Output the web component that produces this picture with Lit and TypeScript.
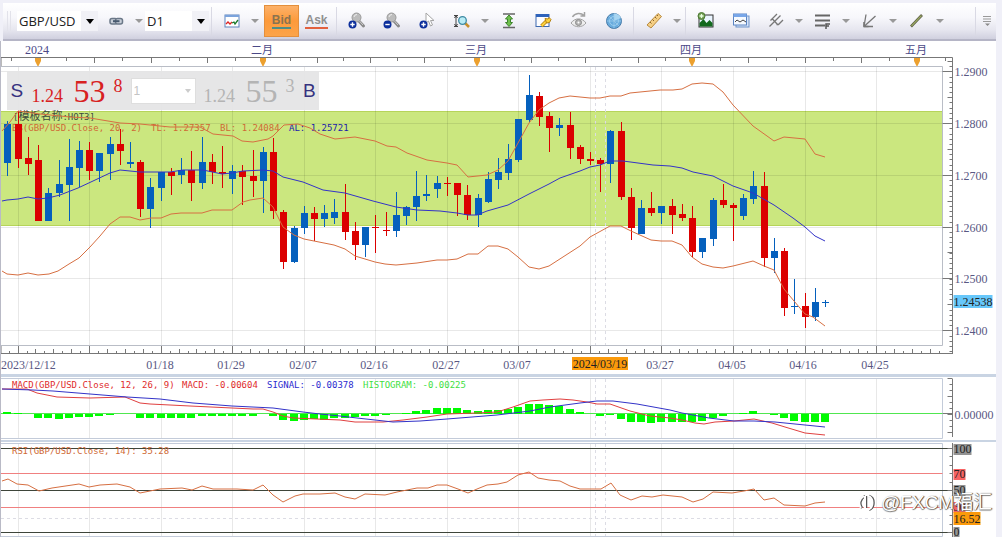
import { LitElement, html, svg, css } from "lit";
import { customElement, state } from "lit/decorators.js";

type Candle = [high: number, top: number, bottom: number, low: number, dir: "u" | "d"];

/* One entry per trading day: wick top, body top, body bottom, wick bottom, direction. */
const CANDLES: Candle[] = [
  [121, 124, 163, 176, "u"], [111, 124, 159, 168, "d"], [137, 158, 164, 175, "d"], [145, 160, 221, 221, "d"],
  [188, 193, 221, 221, "u"], [160, 184, 193, 197, "u"], [139, 167, 185, 221, "u"], [141, 150, 168, 187, "u"],
  [142, 150, 171, 180, "d"], [153, 153, 171, 182, "u"], [137, 144, 154, 180, "u"], [129, 144, 151, 165, "d"],
  [142, 162, 164, 168, "u"], [160, 162, 209, 217, "d"], [178, 187, 209, 228, "u"], [172, 172, 188, 201, "u"],
  [168, 172, 176, 195, "d"], [158, 170, 175, 184, "u"], [151, 170, 183, 201, "d"], [137, 162, 183, 189, "u"],
  [154, 162, 172, 184, "d"], [146, 172, 174, 188, "d"], [165, 171, 179, 194, "u"], [165, 171, 177, 205, "d"],
  [150, 176, 181, 197, "d"], [147, 152, 181, 213, "u"], [138, 152, 211, 219, "d"], [210, 212, 262, 269, "d"],
  [226, 228, 262, 263, "u"], [206, 213, 228, 234, "u"], [207, 213, 219, 241, "d"], [205, 213, 219, 227, "u"],
  [199, 212, 218, 224, "u"], [184, 212, 232, 240, "d"], [222, 231, 245, 260, "d"], [227, 227, 245, 257, "u"],
  [215, 227, 228, 253, "d"], [212, 230, 231, 236, "d"], [192, 215, 231, 237, "u"], [206, 207, 216, 225, "u"],
  [171, 196, 207, 221, "u"], [175, 194, 196, 201, "u"], [176, 183, 189, 198, "u"], [177, 183, 184, 196, "d"],
  [183, 183, 195, 216, "d"], [185, 195, 215, 220, "d"], [194, 198, 215, 227, "u"], [172, 179, 202, 203, "u"],
  [158, 172, 180, 189, "u"], [144, 159, 173, 180, "u"], [119, 119, 160, 162, "u"], [75, 95, 120, 122, "u"],
  [92, 96, 117, 126, "d"], [112, 116, 128, 152, "d"], [118, 125, 128, 136, "u"], [112, 125, 148, 159, "d"],
  [145, 147, 159, 164, "d"], [152, 159, 161, 165, "d"], [158, 160, 164, 192, "d"], [130, 131, 164, 183, "u"],
  [122, 131, 197, 200, "d"], [188, 197, 228, 240, "d"], [200, 208, 234, 234, "u"], [192, 208, 213, 216, "d"],
  [206, 206, 213, 224, "u"], [199, 206, 215, 234, "d"], [204, 214, 218, 221, "d"], [206, 218, 252, 257, "d"],
  [238, 238, 252, 258, "u"], [198, 200, 239, 246, "u"], [184, 200, 205, 208, "d"], [203, 205, 208, 241, "d"],
  [194, 198, 216, 220, "u"], [171, 186, 199, 204, "u"], [172, 186, 258, 267, "d"], [238, 251, 258, 273, "u"],
  [248, 251, 308, 316, "d"], [279, 306, 307, 314, "u"], [293, 306, 317, 328, "d"], [288, 302, 317, 321, "u"],
  [300, 302, 303, 307, "u"],
];

const HISTOGRAM = [
  2, 1, 0, -4, -4, -5, -4, -3, -3, -2, -1, 0, 0, -4, -4, -4, -4, -4, -4, -2, -2, -2, -2, -2, -2, 0, -2, -6, -7, -6,
  -5, -6, -4, -4, -3, -2, -2, -1, 0, 1, 3, 4, 6, 6, 6, 4, 3, 4, 4, 5, 7, 10, 10, 9, 8, 5, 2, 0, -2, -1, -5, -8, -8,
  -9, -8, -8, -8, -8, -7, -4, -2, 0, 1, 3, 0, -1, -4, -7, -8, -8, -8,
];

const BAND_TOP =
  "2,131 10,122 18,111 40,114 70,117 90,118 120,123 140,124 170,127 200,127 213,134 233,136 242,141 253,142 268,139 273,136 284,125 298,124 310,128 320,134 335,139 355,137 375,141 387,146 396,147 407,153 427,160 447,163 457,165 468,177 487,175 498,170 508,161 518,143 529,123 539,110 549,103 559,98 570,96 590,98 600,98 610,96 621,96 630,93 660,90 673,90 682,89 692,84 702,83 713,84 723,92 733,105 753,126 774,141 784,137 805,139 815,154 825,157";
const BAND_MID =
  "2,201 7,200 18,199 28,197 38,199 48,198 60,195 78,188 93,181 110,173 120,170 140,172 170,172 183,170 203,170 222,174 232,173 243,171 263,170 273,171 283,177 303,182 323,190 345,193 373,201 396,207 417,210 440,211 457,213 468,215 477,215 487,211 508,205 529,194 549,184 560,178 580,171 590,167 600,165 610,161 623,161 653,165 670,166 682,168 693,172 713,176 733,186 753,193 774,205 793,218 805,227 815,236 825,241";
const BAND_LOW =
  "2,271 7,274 18,275 28,273 38,275 49,274 58,271 69,264 79,258 90,247 100,236 110,224 120,217 130,217 140,220 151,218 161,218 171,214 181,213 202,213 212,210 232,210 243,202 250,200 263,198 273,207 283,227 294,235 304,239 334,245 345,249 355,256 375,262 385,264 396,265 417,263 437,260 447,260 457,259 468,254 478,254 488,246 498,246 508,249 518,257 529,267 539,269 549,266 580,246 590,237 610,226 621,226 631,231 651,240 661,241 672,241 682,245 692,257 702,264 713,267 723,268 733,266 753,261 764,266 774,270 784,289 794,301 805,314 813,317 825,326";
const MACD =
  "2,389 27,389 37,393 57,397 90,398 125,397 140,403 150,404 190,406 232,408 253,409 263,409 273,412 283,416 293,418 340,420 355,422 383,422 403,420 427,417 447,414 477,413 497,412 513,407 530,401 543,400 560,399 573,400 587,402 597,404 610,404 630,411 650,416 670,418 682,420 695,423 704,424 715,422 734,421 754,419 772,423 785,427 805,433 825,435";
const SIGNAL =
  "2,389 33,390 53,391 90,394 127,397 160,399 193,403 232,406 273,408 303,412 320,414 340,416 357,418 393,422 420,421 447,419 497,415 530,411 550,407 580,403 597,401 613,401 637,404 670,410 682,413 709,418 734,421 754,421 775,422 805,425 825,427";
const RSI =
  "2,481 8,479 17,484 28,485 39,491 52,488 79,484 89,487 100,485 117,484 130,487 140,493 160,489 182,488 192,490 202,486 213,489 237,489 253,490 263,485 273,495 283,502 295,496 303,494 320,494 335,493 345,497 355,499 365,494 385,495 397,492 417,488 428,488 437,485 447,485 458,489 468,493 477,489 487,485 498,484 507,482 518,475 529,472 538,478 549,480 560,481 570,486 580,489 601,489 611,483 620,495 631,500 642,496 652,497 663,495 682,497 693,502 703,499 713,492 732,493 744,491 754,489 764,500 774,498 784,505 805,506 815,503 825,502";

const MONTHS: [number, string][] = [[38, "2024"], [263, "二月"], [477, "三月"], [692, "四月"], [917, "五月"]];
const DATES: [number, string][] = [
  [161, "01/18"], [232, "01/29"], [304, "02/07"], [375, "02/16"], [447, "02/27"], [518, "03/07"], [661, "03/27"],
  [733, "04/05"], [804, "04/16"], [876, "04/25"],
];
const PRICES: [number, string][] = [
  [71, "1.2900"], [123, "1.2800"], [175, "1.2700"], [227, "1.2600"], [278, "1.2500"], [330, "1.2400"],
];

const candleX = (i: number) => 7.4 + i * 10.22;
const gridX = (i: number) => Math.round(17.6 + i * 71.54) + 0.5;

/* Toolbar icons */
const icon = (w: number, body: unknown) =>
  html`<svg class="icon" width=${w} height="20" viewBox="0 0 ${w} 20" aria-hidden="true">${body}</svg>`;

const lens = svg`
  <path d="M10 9 L15.500 15" stroke="#8a8a8a" stroke-width="3" stroke-linecap="round"/>
  <path d="M10.500 9 L15 14" stroke="#ccc" stroke-width="1"/>
  <circle cx="8.500" cy="6.500" r="4.500" fill="#bcbcbc" stroke="#9a9a9a"/>
  <path d="M6 6a3 3 0 0 1 3-2.500" stroke="#eee" fill="none"/>`;
const badge = (plus: boolean) => svg`
  <circle cx="4.500" cy="13.500" r="4" fill="#0c2f9c"/>
  <path d=${plus ? "M2.300 13.500h4.400M4.500 11.300v4.400" : "M2.300 13.500h4.400"} stroke="#fff" stroke-width="1.400"/>`;

const ICONS = {
  link: icon(16, svg`
    <rect x="2" y="7.500" width="7" height="5.500" rx="2" fill="#c7ced8" stroke="#6b7888" stroke-width="1.500"/>
    <rect x="7.500" y="7.500" width="7" height="5.500" rx="2" fill="#c7ced8" stroke="#6b7888" stroke-width="1.500"/>
    <path d="M5 10.200h6.500" stroke="#46586e" stroke-width="2"/>`),
  chart: icon(16, svg`
    <rect x="1" y="4" width="14" height="12" fill="#fff" stroke="#5d83bd"/>
    <path d="M1 5h14" stroke="#7ba3dc" stroke-width="2"/>
    <path d="M2 13l2-2 2 2 2-2" stroke="#d22" fill="none" stroke-width="1.300"/>
    <path d="M8 12l2-1 1 2 3-4" stroke="#1b7a2b" fill="none" stroke-width="1.300"/>`),
  zoomIn: icon(18, svg`${lens}${badge(true)}`),
  zoomOut: icon(18, svg`${lens}${badge(false)}`),
  pointer: icon(16, svg`
    <path d="M7 2v10l2.500-2 2 5 2-1-2-4.500h3.500z" fill="#fff" stroke="#a5a5a5"/>${badge(true)}`),
  scale: icon(18, svg`
    <path d="M3 4v12M1 4.500h4M1 15.500h4M1.500 7L3 4.500 4.500 7M1.500 13L3 15.500 4.500 13" stroke="#444" fill="none"/>
    <path d="M12 12l4 4" stroke="#c8902c" stroke-width="2.500"/>
    <circle cx="9.500" cy="9.500" r="3.800" fill="#b9ecf5" stroke="#3d8aa3" stroke-width="1.300"/>`),
  fit: icon(14, svg`
    <path d="M1 3h12M1 16.500h12" stroke="#666" stroke-width="1.500"/>
    <path d="M7 4l3.500 4H8.500v3.500h2L7 15.500l-3.500-4h2V8h-2z" fill="#6fc04d" stroke="#3c842a"/>`),
  settings: icon(18, svg`
    <rect x="1" y="3.500" width="13" height="12" fill="#fdfdff" stroke="#3d69b0"/>
    <path d="M1 4.500h13" stroke="#2f63bb" stroke-width="3"/>
    <path d="M6.500 15l5-5" stroke="#b58312" stroke-width="3.500"/>
    <path d="M6.500 15l5-5" stroke="#ffd23c" stroke-width="2"/>
    <path d="M10 7.500l3 .5 1-1.500 2 2-1.500 3-3 .5z" fill="#ffd23c" stroke="#b58312"/>`),
  watch: icon(18, svg`
    <path d="M2.500 6C5 1.500 11 1.500 14 4.500M14.500 1v4h-4" fill="none" stroke="#a2a2a2" stroke-width="1.500"/>
    <path d="M1 12c4-5.500 11-5.500 15 0-4 5-11 5-15 0z" fill="#eee" stroke="#a2a2a2"/>
    <circle cx="8.500" cy="11.500" r="3" fill="#b4b4b4" stroke="#8a8a8a"/><circle cx="8.500" cy="11.500" r="1" fill="#fff"/>`),
  radar: icon(18, svg`
    <circle cx="9" cy="10" r="7.500" fill="#68abdd" stroke="#487ba8"/>
    <path d="M9 10L9 2.500A7.500 7.500 0 0 1 16 7z" fill="#a7d5f2"/>
    <circle cx="9" cy="10" r="4.500" fill="none" stroke="#a7d5f2" stroke-width=".800"/>
    <path d="M1.500 10h15M9 2.500v15M3.800 4.800l10.400 10.400" stroke="#9bcaea" stroke-width=".800"/>`),
  ruler: icon(18, svg`
    <path d="M2 14L13 2.500l3.500 3L6 17z" fill="#f5cf85" stroke="#b98a3d"/>
    <path d="M5 11l1.500 1.500M7.500 8.500L9 10M10 6l1.500 1.500M12 4l1 1" stroke="#8c6526"/>`),
  picture: icon(18, svg`
    <rect x="2" y="4" width="14" height="12" fill="#eaf5ff" stroke="#333"/>
    <path d="M2.500 15.500V12l4-4 3 4 3-3 3 3v3.500z" fill="#12691d"/>
    <circle cx="4.500" cy="5" r="3.500" fill="#719e52" stroke="#4d7a35"/>
    <path d="M2.500 5h4M4.500 3v4" stroke="#e8ffe0" stroke-width="1.300"/>`),
  windows: icon(18, svg`
    <rect x="4" y="5" width="13" height="11" fill="#d4e3f8" stroke="#6f93c9"/>
    <rect x="1.500" y="3" width="13" height="11" fill="#f6faff" stroke="#5b84c2"/>
    <path d="M1.500 4.500h13" stroke="#78a6e8" stroke-width="3"/>
    <path d="M3 11l2-2 3 2 3-2 3 2" stroke="#444" fill="none"/>`),
  fork: icon(16, svg`
    <path d="M1.500 15.500L6 11M2.500 9.500L9 3M4 7.500l6 6.500M6 11L12.500 4.500M8.500 13.500h2L15 9" stroke="#777" stroke-width="1.300" fill="none"/>`),
  levels: icon(18, svg`
    <path d="M1 4.500h15M1 9.500h15M1 14.500h10" stroke="#666" stroke-width="2"/>
    <path d="M12 18v-5h4M12 15h3" stroke="#555" stroke-width="1.500" fill="none"/>`),
  fan: icon(16, svg`
    <path d="M2 15.500L4 3.500M2 15.500L13.500 5M2 15.500h9" stroke="#777" stroke-width="1.300" fill="none"/>
    <path d="M2 11v4.500h4.500" stroke="#777" stroke-width="1.600" fill="none"/>`),
  line: icon(16, svg`
    <path d="M2 15.500L13 4" stroke="#5b5b45" stroke-width="2.600"/>
    <path d="M2.500 15L12.500 4.500" stroke="#98a860" stroke-width="1.200"/>`),
  overflow: icon(10, svg`
    <path d="M1 5.500h8M1 8h8M1 10.500h8" stroke="#999"/><path d="M3 12.500h5L5.500 15z" fill="#888"/>`),
};

@customElement("chart-toolbar")
class ChartToolbar extends LitElement {
  static styles = css`
    :host { display: block; }
    .bar {
      display: flex; align-items: center; height: 36px; margin: 3px 6px 0 3px;
      background: linear-gradient(#ffffff, #f7f7fb 40%, #e6e6ef 75%, #d0d0df);
      border-bottom: 2px solid #b5b5c6; box-sizing: content-box;
    }
    .grip { width: 6px; height: 20px; margin: 0 4px; background: repeating-linear-gradient(90deg, #e2e2ea 0 1px, transparent 1px 3px); }
    .pick { position: relative; display: flex; }
    .pick::after {
      content: ""; position: absolute; right: 4px; top: 8px; pointer-events: none;
      border: 4px solid transparent; border-top: 5px solid #000; border-bottom: 0;
    }
    select {
      appearance: none; border: 0; border-right: 17px solid #f1f1f6; margin: 0; padding: 0 0 0 2px; height: 20px;
      background: #fff; color: #222; font: 13px "Open Sans", "Noto Sans", sans-serif; border-radius: 0;
    }
    .symbol { width: 81px; }
    .period { width: 64px; }
    button {
      display: flex; align-items: center; justify-content: center; flex: none;
      width: 35px; height: 32px; padding: 0; margin: 0; border: 0; background: none;
      font: bold 12px "Liberation Sans", sans-serif; color: #8f8f8f;
    }
    .icon { display: block; }
    .more { width: 12px; }
    .more::after { content: ""; border: 4px solid transparent; border-top-color: #999; margin-top: 3px; }
    .active { background: linear-gradient(#fcb16a, #fd9a3a 50%, #fca44a); border: 1px solid #e48f3c; color: #8a7350; margin-left: 3px; }
    .quote { border-bottom: 2px solid #e2603d; line-height: 13px; }
    .active .quote { border-color: #4f8d86; }
    .sep { width: 1px; height: 28px; margin: 0 2px; background: #d9d9e4; flex: none; }
    .last { margin-left: auto; }
    .end { width: 18px; }
  `;

  private tool(name: string, key: keyof typeof ICONS, more = false) {
    return html`<button aria-label=${name}>${ICONS[key]}</button>
      ${more ? html`<button class="more" aria-label="${name}选项"></button>` : ""}`;
  }

  render() {
    return html`<div class="bar" role="toolbar">
      <span class="grip"></span>
      <span class="pick"><select class="symbol" aria-label="交易品种"><option>GBP/USD</option></select></span>
      ${this.tool("链接", "link", true)}
      <span class="pick"><select class="period" aria-label="周期"><option>D1</option></select></span>
      <span class="sep"></span>
      ${this.tool("图表类型", "chart", true)}
      <button class="active"><span class="quote">Bid</span></button>
      <button><span class="quote">Ask</span></button>
      <span class="sep"></span>
      ${this.tool("放大", "zoomIn")}${this.tool("缩小", "zoomOut")}${this.tool("指针", "pointer")}
      ${this.tool("缩放", "scale", true)}${this.tool("适应", "fit")}${this.tool("设置", "settings")}
      ${this.tool("显示", "watch")}${this.tool("扫描", "radar")}
      <span class="sep"></span>
      ${this.tool("标尺", "ruler", true)}
      <span class="sep"></span>
      ${this.tool("图片", "picture")}${this.tool("窗口", "windows")}${this.tool("叉线", "fork", true)}
      ${this.tool("水平", "levels", true)}${this.tool("扇形", "fan", true)}${this.tool("直线", "line", true)}
      <span class="sep last"></span>
      <button class="end" aria-label="更多">${ICONS.overflow}</button>
    </div>`;
  }
}

@customElement("quote-ticket")
class QuoteTicket extends LitElement {
  static styles = css`
    :host { display: block; }
    .ticket {
      display: flex; align-items: center; gap: 8px; height: 39px; width: 312px; box-sizing: border-box; padding: 0 3px;
      background: rgba(229, 229, 230, 0.96); font-family: "Liberation Serif", serif;
    }
    .side { border: 0; background: none; padding: 0; width: 14px; font: 19px "Liberation Sans", sans-serif; color: #36327f; }
    .price { display: flex; align-items: flex-end; color: #d8211f; width: 92px; }
    .price.ask { color: #b4b4b4; }
    .lead { font-size: 18px; line-height: 18px; width: 42px; }
    .big { font-size: 32px; line-height: 28px; width: 40px; }
    .pip { font-size: 18px; line-height: 18px; align-self: flex-start; }
    .size { position: relative; display: flex; }
    .size::after {
      content: ""; position: absolute; right: 5px; top: 11px; pointer-events: none;
      border: 3px solid transparent; border-top: 4px solid #ccc; border-bottom: 0;
    }
    select {
      appearance: none; border: 1px solid #dedede; border-radius: 0; margin: 0; padding: 0 2px; width: 65px; height: 26px;
      background: #fff; color: #c4c4c4; font: 12px "Liberation Sans", sans-serif;
    }
  `;
  render() {
    return html`<div class="ticket">
      <button class="side">S</button>
      <span class="price"><span class="lead">1.24</span><span class="big">53</span><span class="pip">8</span></span>
      <span class="size"><select aria-label="数量"><option>1</option></select></span>
      <span class="price ask"><span class="lead">1.24</span><span class="big">55</span><span class="pip">3</span></span>
      <button class="side">B</button>
    </div>`;
  }
}

@customElement("app-root")
class AppRoot extends LitElement {
  static styles = css`
    :host { display: block; background: #f0f0f8; }
    .window { position: relative; overflow: hidden; }
    .charts { margin-right: 6px; border-left: 1px solid #b9bac6; background: #fff; }
    .panel { display: block; width: 100%; }
    .split { background: #c9d4e3; height: 3px; }
    .split.thin { height: 2px; }
    .ticket { position: absolute; left: 7px; top: 71px; }
    .brand {
      position: absolute; right: 10px; bottom: 22px; display: flex; align-items: center; gap: 4px;
      font: 19px/24px "Liberation Sans", "Noto Sans CJK SC", sans-serif; color: #fff;
      text-shadow: 1px 0 1px #333, 0 1px 1px #888; pointer-events: none;
    }
    .axis { font: 12px "Liberation Serif", serif; fill: #595783; }
    .month { font: 11px "Noto Sans CJK SC", sans-serif; fill: #4b4987; }
    .year { font: 12px "Liberation Serif", serif; fill: #4b4987; }
    .legend { font: 9px "DejaVu Sans Mono", "Noto Sans CJK SC", monospace; white-space: pre; }
    .template { fill: #3d4a3c; }
    .cjk { font-size: 11px; }
    .orange { fill: #cf6a35; }
    .blue { fill: #2b2bcf; }
    .navy { fill: #1b1baa; }
    .red { fill: #e02c2c; }
    .green { fill: #3fe03f; }
    .mid { text-anchor: middle; }
    .dark { fill: #222; }
    .grid { stroke: #000; stroke-opacity: 0.09; }
    .frame { stroke: #b9bdc6; fill: none; }
    .edge { stroke: #c3cbd9; fill: none; }
    .rule { stroke: #777; fill: none; }
    .zero { stroke: #50e650; }
    .limit { stroke: #f08080; }
    .level { stroke: #3e453a; }
    .cross { stroke: #dcdce4; stroke-dasharray: 3 3; }
    .curve { fill: none; stroke-width: 1; }
    .c-orange { stroke: #d66f42; }
    .c-blue { stroke: #3333c8; }
    .c-red { stroke: #e04040; }
  `;

  @state() private width = 995;
  private observer = new ResizeObserver((e) => {
    this.width = Math.round(e[0].contentRect.width);
  });

  firstUpdated() {
    this.observer.observe(this.renderRoot.querySelector(".charts")!);
  }
  disconnectedCallback() {
    super.disconnectedCallback();
    this.observer.disconnect();
  }

  private grid(y1: number, y2: number, right: number) {
    const count = Math.floor((right - 18) / 71.54) + 1;
    return svg`
      ${Array.from({ length: count }, (_, i) => svg`<line class="grid" x1=${gridX(i)} x2=${gridX(i)} y1=${y1} y2=${y2}/>`)}
      ${[595.5, 605.5].map((x) => svg`<line class="cross" x1=${x} x2=${x} y1=${y1} y2=${y2}/>`)}`;
  }

  /* Ticks on the left side of the value axis; every n-th is longer. */
  private ticks(axis: number, from: number, step: number, count: number, long: number) {
    let d = "";
    for (let i = 0; i < count; i++) {
      const y = Math.round(from + i * step) + 0.5;
      d += `M${axis} ${y}h${i % long === 0 ? -5 : -3}`;
    }
    return svg`<path class="rule" d=${d}/>`;
  }

  private price(w: number) {
    const right = w - 52.5;
    const axis = w - 42.5;
    const stops = [-176, ...MONTHS.map((m) => m[0]), 1142];
    let top = "";
    for (let s = 0; s < stops.length - 1; s++) {
      for (let i = 0; i < 8; i++) {
        const x = Math.round(stops[s] + ((stops[s + 1] - stops[s]) * i) / 8) + 0.5;
        if (x > 2 && x < axis) top += `M${x} 58v${i % 2 ? 3 : 5}`;
      }
    }
    let bottom = "";
    for (let i = -1; 17.6 + i * 8.943 < right; i++) {
      const x = Math.round(17.6 + i * 8.943) + 0.5;
      bottom += `M${x} 354v${i % 8 === 0 ? -8 : i % 2 ? -3 : -5}`;
    }
    return svg`
      <rect x="1" y="112" width=${right - 1} height="114" fill="#cbe77f"/>
      <path d="M1 111.500H${right}M1 225.500H${right}" stroke="#b6d45a"/>
      ${this.grid(67, 346, right)}
      ${PRICES.map(([y]) => svg`<line class="grid" x1="1" x2=${right} y1=${y + 0.5} y2=${y + 0.5}/>`)}
      <path class="frame" d="M1 66.500H${right}V345.500H1"/>
      <path class="rule" d="M1 66V57.500H${axis}V354M${axis} 353.500H1V346"/>
      <path class="rule" d=${top}/>
      <path class="rule" d=${bottom}/>
      ${this.ticks(axis, 61, 5.18, 57, 100)}
      ${this.ticks(axis, 97, 51.8, 5, 1)}
      ${PRICES.map(([y, t]) => svg`
        <path class="rule" d="M${right} ${y + 0.5}H${axis}"/>
        <text class="axis" x=${axis + 2} y=${y + 5}>${t}</text>`)}
      ${MONTHS.map(([x, t]) => svg`
        <text class="mid ${t === "2024" ? "year" : "month"}" x=${x - 1} y="54">${t}</text>
        <path d="M${x - 3} 58h6v3l-2.500 5h-1l-2.500-5z" fill="#eca02e"/>`)}
      <text class="legend template" x="13" y="120">[<tspan class="cjk">模板名称</tspan>:HOT3]</text>
      <text class="legend orange" x="12" y="131">BB(GBP/USD.Close, 20, 2)</text>
      <text class="legend orange" x="151" y="131">TL: 1.27357</text>
      <text class="legend orange" x="220" y="131">BL: 1.24084</text>
      <text class="legend navy" x="289" y="131">AL: 1.25721</text>
      ${CANDLES.map(([h, t, b, l, dir], i) => {
        const x = Math.round(candleX(i));
        const fill = dir === "u" ? "#0560bd" : "#db0000";
        return svg`
          <rect x=${x} y=${h} width="1" height=${l - h} fill=${fill}/>
          <rect x=${x - 3} y=${t} width="7" height=${Math.max(1, b - t)} fill=${fill}/>`;
      })}
      <polyline class="curve c-orange" points=${BAND_TOP}/>
      <polyline class="curve c-orange" points=${BAND_LOW}/>
      <polyline class="curve c-blue" points=${BAND_MID}/>
      <text class="axis" x="1" y="369">2023/12/12</text>
      ${DATES.map(([x, t]) => svg`<text class="axis mid" x=${x - 1} y="369">${t}</text>`)}
      <rect x="572" y="357" width="56" height="13" fill="#fb9a0b"/>
      <text class="axis mid dark" x="600" y="368">2024/03/19</text>
      <rect x=${axis + 1} y="295" width="39" height="13" fill="#68c8fb"/>
      <text class="axis dark" x=${axis + 1} y="306">1.24538</text>`;
  }

  private macd(w: number) {
    const right = w - 52.5;
    const axis = w - 42.5;
    return svg`
      ${this.grid(379, 438, right)}
      <path class="edge" d="M1 378.500H${right}V438.500H1"/>
      <path class="rule" d="M${axis} 379V437M${right} 413.500H${axis}"/>
      <path class="zero" d="M1 413.500H${right}"/>
      ${HISTOGRAM.map((v, i) => v === 0 ? "" : svg`
        <rect x=${Math.round(candleX(i)) - 4} y=${v > 0 ? 414 - v : 414} width="8" height=${Math.abs(v)} fill="#00fb00"/>`)}
      <polyline class="curve c-red" points=${MACD}/>
      <polyline class="curve c-blue" points=${SIGNAL}/>
      <text class="legend red" x="12" y="388">MACD(GBP/USD.Close, 12, 26, 9)</text>
      <text class="legend red" x="182" y="388">MACD: -0.00604</text>
      <text class="legend blue" x="267" y="388">SIGNAL: -0.00378</text>
      <text class="legend green" x="363" y="388">HISTOGRAM: -0.00225</text>
      ${this.ticks(axis, 378, 6, 10, 3)}
      <text class="axis" x=${axis + 2} y="419">0.00000</text>`;
  }

  private rsi(w: number) {
    const right = w - 52.5;
    const axis = w - 42.5;
    const tag = (y: number, t: string, bg: string, tw: number) => svg`
      <rect x=${axis + 1} y=${y - 5} width=${tw} height="11" fill=${bg}/>
      <text class="axis dark" x=${axis + 1} y=${y + 4}>${t}</text>`;
    return svg`
      ${this.grid(444, 536, right)}
      <path class="edge" d="M1 443.500H${right}V536.500H1"/>
      <path class="level" d="M1 448.500H${axis}M1 490.500H${axis}M1 532.500H${axis}"/>
      <path class="limit" d="M1 473.500H${right}M1 507.500H${right}"/>
      <path class="cross" d="M1 518.500H${right}"/>
      <text class="legend orange" x="12" y="454">RSI(GBP/USD.Close, 14): 35.28</text>
      <polyline class="curve c-orange" points=${RSI}/>
      <path class="rule" d="M${axis} 443V537"/>
      ${this.ticks(axis, 448, 8.4, 11, 5)}
      ${tag(449, "100", "#939393", 18)}
      ${tag(474, "70", "#f76262", 12)}
      ${tag(490, "50", "#939393", 12)}
      ${tag(507, "30", "#f76262", 12)}
      ${tag(532, "0", "#939393", 6)}
      <rect x=${axis + 1} y="512" width="27" height="13" fill="#fb9a0b"/>
      <text class="axis dark" x=${axis + 1} y="523">16.52</text>`;
  }

  render() {
    const w = this.width;
    return html`<main class="window">
      <chart-toolbar></chart-toolbar>
      <section class="charts">
        <svg class="panel" height="333" viewBox="1 41 ${w} 333">${this.price(w)}</svg>
        <div class="split"></div>
        <svg class="panel" height="63" viewBox="1 377 ${w} 63">${this.macd(w)}</svg>
        <div class="split thin"></div>
        <svg class="panel" height="95" viewBox="1 442 ${w} 95">${this.rsi(w)}</svg>
      </section>
      <quote-ticket class="ticket"></quote-ticket>
      <div class="brand">
        <svg width="20" height="24" viewBox="0 0 20 24" fill="none" aria-hidden="true">
          <path d="M8 5C3 8 2 13 5 17M9 5v12M12 5c6 2 6 11 0 14" stroke="#555" stroke-width="2.500"/>
          <path d="M7 5C2 8 1 13 4 17M8 5v12M11 5c6 2 6 11 0 14" stroke="#fff" stroke-width="2"/>
        </svg>
        <span>@FXCM福汇</span>
      </div>
    </main>`;
  }
}
